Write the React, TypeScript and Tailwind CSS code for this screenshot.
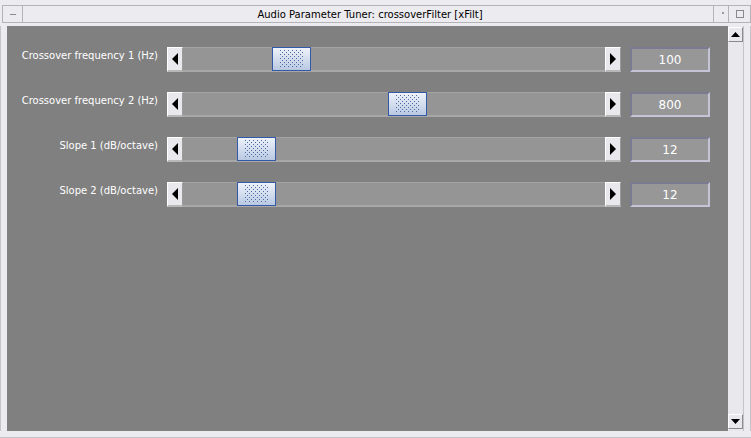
import React from 'react';

type Param = { label: string; value: string; thumb: number };

const params: Param[] = [
  { label: 'Crossover frequency 1 (Hz)', value: '100', thumb: 89 },
  { label: 'Crossover frequency 2 (Hz)', value: '800', thumb: 205 },
  { label: 'Slope 1 (dB/octave)', value: '12', thumb: 54 },
  { label: 'Slope 2 (dB/octave)', value: '12', thumb: 54 },
];

const Dots = () => (
  <svg width="24" height="18" className="block">
    <defs>
      <pattern id="dots" width="4" height="4" patternUnits="userSpaceOnUse">
        <rect x="0" y="0" width="1" height="1" fill="#4a6aa8" />
        <rect x="2" y="2" width="1" height="1" fill="#4a6aa8" />
      </pattern>
    </defs>
    <rect width="24" height="18" fill="url(#dots)" />
  </svg>
);

const ArrowButton = ({ dir }: { dir: 'left' | 'right' }) => (
  <div className="flex h-[25px] w-[16px] items-center justify-center border-t border-l border-white border-r border-r-[#9a9a9a] border-b-2 border-b-[#b8b8b8] bg-[#e9e8ec]">
    <svg width="6" height="12">
      {dir === 'left' ? <polygon points="6,0 6,12 0,6" fill="#000" /> : <polygon points="0,0 0,12 6,6" fill="#000" />}
    </svg>
  </div>
);

const Slider = ({ thumb }: { thumb: number }) => (
  <div className="flex w-[454px]">
    <ArrowButton dir="left" />
    <div className="relative h-[25px] flex-1 border-t border-t-[#a4a4a4] border-b-2 border-b-[#a8a8a8] bg-[#959595]">
      <div
        className="absolute top-[-1px] flex h-[24px] w-[39px] items-center justify-center border border-[#3459a6] bg-gradient-to-b from-[#eef2fa] to-[#b9c9e2]"
        style={{ left: thumb }}
      >
        <Dots />
      </div>
    </div>
    <ArrowButton dir="right" />
  </div>
);

const ScrollButton = ({ up }: { up: boolean }) => (
  <div className="flex h-[15px] w-[15px] items-center justify-center border-t border-l border-white border-r border-b border-r-[#8a8a8a] border-b-[#8a8a8a] bg-[#e9e8ec]">
    <svg width="9" height="5">
      {up ? <polygon points="0,5 9,5 4.5,0" fill="#000" /> : <polygon points="0,0 9,0 4.5,5" fill="#000" />}
    </svg>
  </div>
);

export default function App() {
  return (
    <div className="flex h-[438px] w-[751px] flex-col bg-[#ecebef] font-['DejaVu_Sans',sans-serif] text-[10px]">
      {/* title bar */}
      <div className="flex h-[26px] shrink-0 pt-[5px]">
        <div className="ml-[2px] flex h-[18px] w-[21px] items-center justify-center border-t border-l border-r border-b border-[#b4b4b8]">
          <div className="h-px w-[6px] bg-[#8a8a8a]" />
        </div>
        <div className="flex h-[18px] flex-1 items-center justify-center border-t border-b border-[#b4b4b8] pl-[4px] text-[#000]">
          Audio Parameter Tuner: crossoverFilter [xFilt]
        </div>
        <div className="flex h-[18px] w-[15px] items-start justify-end border-t border-b border-l border-[#b4b4b8] pt-[6px] pr-[4px]">
          <div className="h-[2px] w-[2px] bg-[#9a9a9a]" />
        </div>
        <div className="flex h-[18px] w-[23px] items-center justify-center border border-[#b4b4b8]">
          <div className="h-[8px] w-[8px] border border-[#8a8a8a]" />
        </div>
      </div>

      {/* body */}
      <div className="flex min-h-0 flex-1">
        <div className="w-[7px] shrink-0 border-l border-l-[#c4c4c8]" />
        <div className="flex flex-1 flex-col gap-[20px] bg-[#808080] pt-[21px]">
          {params.map((p) => (
            <div key={p.label} className="flex h-[25px] items-start">
              <div className="w-[151px] shrink-0 pt-[2px] text-right leading-[14px] text-white">{p.label}</div>
              <div className="ml-[9px]">
                <Slider thumb={p.thumb} />
              </div>
              <div className="ml-[9px] flex h-[25px] w-[80px] items-center justify-center border-2 border-t-[#7a7a92] border-l-[#7a7a92] border-r-[#c4c4d6] border-b-[#c4c4d6] bg-[#979797] text-[12px] text-white">
                {p.value}
              </div>
            </div>
          ))}
        </div>
        <div className="flex w-[15px] shrink-0 flex-col justify-between bg-[#e9e8ec] pt-px pb-[2px]">
          <ScrollButton up />
          <ScrollButton up={false} />
        </div>
        <div className="w-[8px] shrink-0 border-l border-l-[#c4c4c8] border-r border-r-[#c4c4c8]" />
      </div>
      <div className="h-[7px] shrink-0 border-b border-b-[#c4c4c8]" />
    </div>
  );
}
